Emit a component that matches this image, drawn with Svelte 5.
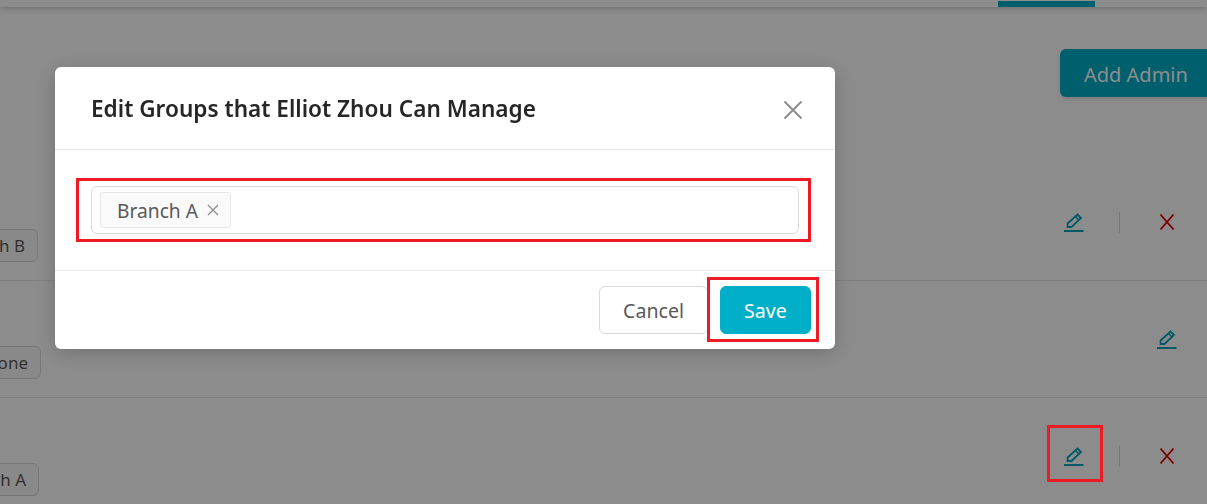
<script>
  // edge = where each tag ends, the table is scrolled so tags run off the left side
  const rows = [
    { tag: "Branch B", edge: 38, removable: true },
    { tag: "None", edge: 41, removable: false },
    { tag: "Branch A", edge: 39, removable: true, marked: true },
  ];
</script>

<div class="page">
  <header class="topbar">
    <span class="tab-active"></span>
  </header>

  <div class="toolbar">
    <button type="button" class="add-admin">Add Admin</button>
  </div>

  <div class="rows">
    {#each rows as row}
      <div class="row">
        <div class="tag-cell" style="width: {row.edge}px"><span class="row-tag">{row.tag}</span></div>
        <div class="actions">
          <button type="button" class="icon-btn" class:callout={row.marked} aria-label="Edit">
            <svg width="20" height="20" viewBox="0 0 20 20" fill="none" stroke="#00a3b8">
              <path d="M3.6 15 V11.5 L13.5 2.5 L17 6 L7.5 15 Z" stroke-width="1.8" stroke-linejoin="miter" />
              <path d="M11.5 4.5 L15 8" stroke-width="1.4" />
              <path d="M0 19 H19.5" stroke-width="2" />
            </svg>
          </button>
          {#if row.removable}
            <span class="sep"></span>
            <button type="button" class="icon-btn" aria-label="Remove">
              <svg width="18" height="18" viewBox="0 0 18 18" fill="none" stroke="#e00000" stroke-width="1.9">
                <path d="M2.5 1.5 L15.5 16.5 M15.5 1.5 L2.5 16.5" />
              </svg>
            </button>
          {/if}
        </div>
      </div>
    {/each}
  </div>
</div>

<div class="mask"></div>

<div class="modal" role="dialog" aria-label="Edit Groups">
  <div class="modal-head">
    <h2>Edit Groups that Elliot Zhou Can Manage</h2>
    <button type="button" class="close" aria-label="Close">
      <svg width="20" height="20" viewBox="0 0 20 20" fill="none" stroke="#8c8c8c" stroke-width="1.9">
        <path d="M1.5 1.5 L18.5 18.5 M18.5 1.5 L1.5 18.5" />
      </svg>
    </button>
  </div>

  <div class="modal-body">
    <div class="select callout">
      <span class="chip">
        Branch A
        <svg width="12" height="12" viewBox="0 0 12 12" fill="none" stroke="#8c8c8c" stroke-width="1.2">
          <path d="M1 1 L11 11 M11 1 L1 11" />
        </svg>
      </span>
    </div>
  </div>

  <div class="modal-foot">
    <button type="button" class="btn">Cancel</button>
    <button type="button" class="btn primary callout">Save</button>
  </div>
</div>

<style>
  :global(body) {
    margin: 0;
    background: #fff;
    overflow: hidden;
    font-family: "Noto Sans", "Open Sans", sans-serif;
  }

  button {
    font-family: inherit;
    cursor: pointer;
  }

  .page {
    width: 1207px;
    height: 504px;
    overflow: hidden;
    background: #fff;
  }

  .topbar {
    height: 7px;
    display: flex;
    justify-content: flex-end;
    padding-right: 112px;
    box-sizing: border-box;
    background: #fff;
    box-shadow: 0 1px 6px rgba(0, 0, 0, 0.25);
  }

  .tab-active {
    width: 97px;
    height: 6px;
    margin-top: 1px;
    background: #00aec7;
  }

  .toolbar {
    display: flex;
    justify-content: flex-end;
    padding-top: 42px;
    height: 157px;
    box-sizing: border-box;
    margin-right: -20px;
  }

  .add-admin {
    width: 167px;
    height: 48px;
    padding: 2px 0 0 3px;
    text-align: left;
    text-indent: 21px;
    border: none;
    border-radius: 6px;
    background: #00aec7;
    color: #fff;
    font-size: 20px;
    box-shadow: 0 2px 4px rgba(0, 0, 0, 0.12);
  }

  .rows {
    display: flex;
    flex-direction: column;
  }

  .row {
    height: 117px;
    box-sizing: border-box;
    border-bottom: 1px solid #e8e8e8;
    display: flex;
    justify-content: space-between;
    align-items: center;
    padding-right: 26px;
  }

  .tag-cell {
    align-self: flex-start;
    margin-top: 65px;
    display: flex;
    justify-content: flex-end;
  }

  .row-tag {
    flex: none;
    height: 33px;
    padding: 0 12px;
    display: flex;
    align-items: center;
    box-sizing: border-box;
    border: 1px solid #d9d9d9;
    border-radius: 6px;
    background: #fafafa;
    color: #595959;
    font-size: 17px;
  }

  .actions {
    display: flex;
    align-items: center;
  }

  .icon-btn {
    width: 28px;
    height: 28px;
    padding: 0;
    border: none;
    background: none;
    display: flex;
    align-items: center;
    justify-content: center;
  }

  .sep {
    width: 1px;
    height: 21px;
    margin: 0 33px 0 31px;
    background: #d9d9d9;
  }

  .mask {
    position: fixed;
    inset: 0;
    background: rgba(0, 0, 0, 0.45);
  }

  .modal {
    position: fixed;
    left: 55px;
    top: 67px;
    width: 780px;
    height: 282px;
    background: #fff;
    border-radius: 6px;
    box-shadow: 0 4px 20px rgba(0, 0, 0, 0.2);
    display: flex;
    flex-direction: column;
  }

  .modal-head {
    height: 83px;
    box-sizing: border-box;
    border-bottom: 1px solid #e8e8e8;
    display: flex;
    align-items: center;
    justify-content: space-between;
    padding: 0 32px 0 36px;
  }

  h2 {
    margin: 0;
    font-size: 22.6px;
    font-weight: 600;
    color: #262626;
  }

  .close {
    padding: 4px 0 0;
    border: none;
    background: none;
    display: flex;
  }

  .modal-body {
    height: 121px;
    box-sizing: border-box;
    border-bottom: 1px solid #e8e8e8;
    padding: 36px 36px 0;
  }

  .select {
    height: 48px;
    box-sizing: border-box;
    border: 1px solid #d9d9d9;
    border-radius: 6px;
    padding: 5px 8px;
    display: flex;
  }

  .chip {
    height: 36px;
    box-sizing: border-box;
    padding: 0 11px 0 16px;
    display: flex;
    align-items: center;
    gap: 9px;
    border: 1px solid #e8e8e8;
    border-radius: 3px;
    background: #fafafa;
    color: #595959;
    font-size: 19.2px;
  }

  .modal-foot {
    display: flex;
    justify-content: flex-end;
    gap: 12px;
    padding: 15px 24px 0;
  }

  .btn {
    height: 48px;
    width: 109px;
    border: 1px solid #d9d9d9;
    border-radius: 6px;
    background: #fff;
    color: #595959;
    font-size: 19.6px;
    padding: 0;
  }

  .primary {
    width: 91px;
    border-color: #00aec7;
    background: #00aec7;
    color: #fff;
  }

  .callout {
    position: relative;
  }

  /* red annotation frames drawn over the screenshot */
  .callout::after {
    content: "";
    position: absolute;
    z-index: 2;
    border: 3px solid #ed1c24;
    pointer-events: none;
  }

  .select.callout::after {
    inset: -9px -13px -9px -16px;
  }

  .primary.callout::after {
    inset: -10px -9px -9px -14px;
  }

  .icon-btn.callout::after {
    inset: -17px -15px -12px -13px;
  }
</style>
